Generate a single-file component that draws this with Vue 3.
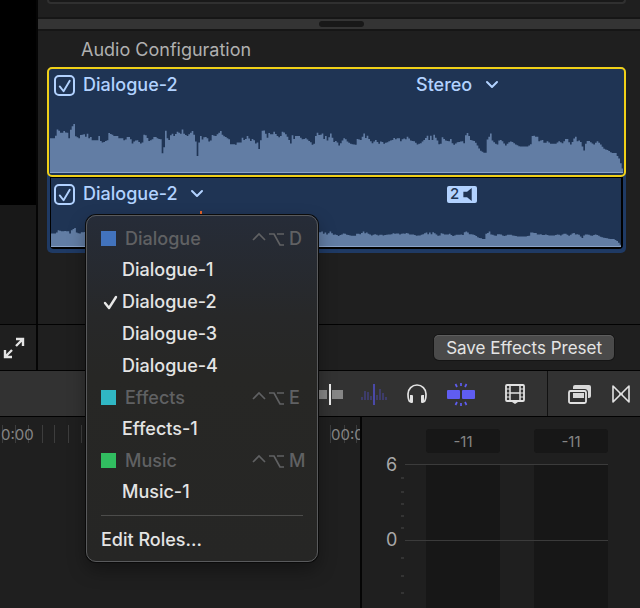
<script setup>
import { ref } from 'vue'

const roleA = ref(true)
const roleB = ref(true)
const layout = ref('Stereo')
const current = ref('Dialogue-2')

const groups = [
  { name: 'Dialogue', key: 'D', tone: 'blue', items: ['Dialogue-1', 'Dialogue-2', 'Dialogue-3', 'Dialogue-4'] },
  { name: 'Effects', key: 'E', tone: 'teal', items: ['Effects-1'] },
  { name: 'Music', key: 'M', tone: 'green', items: ['Music-1'] },
]

// Audio peaks as [position, level] pairs, in thirds of a pixel.
const head = '0,103 10,103 12,110 18,113 20,130 28,123 32,117 40,125 46,120 52,120 56,97 58,125 65,140 69,153 73,130 74,110 85,103 90,113 100,115 107,105 110,117 116,100 120,107 125,97 140,97 145,110 150,95 155,90 165,95 170,97 175,119 183,115 190,110 200,110 205,103 215,103 222,95 232,110 238,105 245,87 252,95 260,97 270,87 275,90 281,119 288,107 295,95 305,100 312,110 320,103 330,100 333,85 335,57 339,57 341,95 343,130 348,120 352,87 358,110 365,117 370,110 380,123 390,117 394,133 400,117 410,110 415,115 425,125 432,110 436,87 439,49 443,49 445,90 450,110 456,97 462,110 470,103 478,87 484,113 495,110 505,120 512,127 516,110 525,107 535,100 540,85 550,85 553,80 560,90 570,90 575,105 582,95 590,110 600,95 607,103 615,87 620,90 624,70 628,70 632,125 640,127 643,105 647,129 651,97 656,125 662,110 670,123 680,110 688,103 694,123 702,120 712,105 720,87 724,117 728,97 735,110 745,110 755,100 765,103 775,95 782,90 788,77 792,95 798,125 803,113 812,115 818,103 826,97 836,113'
const tail = '0,114 5,118 10,101 12,118 20,96 25,106 31,121 36,101 42,88 46,98 55,81 65,96 72,106 78,94 90,86 105,83 110,101 120,98 130,118 135,104 140,111 145,101 155,88 165,98 175,86 182,96 190,86 205,94 215,98 220,104 228,98 232,108 240,94 248,104 254,98 260,108 270,96 280,94 290,84 300,88 310,98 320,111 325,98 330,111 335,98 340,114 350,96 358,78 365,106 375,96 385,94 390,101 398,81 410,91 425,94 432,86 436,121 442,118 450,98 462,94 470,81 478,66 490,59 495,59 498,96 505,108 510,118 515,96 525,86 530,84 537,101 545,94 555,81 565,91 572,94 585,84 598,78 620,78 632,86 636,118 642,108 650,108 655,94 665,98 672,86 680,94 690,86 705,86 715,94 725,88 735,101 742,101 748,81 756,94 764,111 770,94 778,98 782,86 790,66 795,86 802,98 810,91 820,84 830,94 840,84 850,71 862,66 872,58 885,58 895,41 902,21 908,2'

const parse = (s, dx) => s.split(' ').map((p) => p.split(',').map(Number)).map(([x, y]) => [x + dx, y])
const peaks = [...parse(head, 0).filter((p) => p[0] < 810), ...parse(tail, 810)]

function wave(total, scale) {
  let d = `M0 ${total}`
  let i = 0
  for (let x = 0; x < 1719; x += 5) {
    while (i < peaks.length - 1 && peaks[i + 1][0] <= x) i++
    const [x0, y0] = peaks[i]
    const [x1, y1] = peaks[Math.min(i + 1, peaks.length - 1)]
    const t = x1 > x0 ? (x - x0) / (x1 - x0) : 0
    const top = Math.round(total - (y0 + (y1 - y0) * t) * scale)
    d += `V${top}H${Math.min(x + 5, 1719)}`
  }
  return d + `V${total}Z`
}
const mainWave = wave(165, 1)
const subWave = wave(75, 0.38)

const rulerTicks = [2, 15, 28, 42, 54, 68, 81, 330, 344, 356]
const minorTicks = [34, 48, 60, 72, 84, 114, 132, 149]
</script>

<template>
  <main class="app">
    <div class="upper">
      <div class="viewer"><div class="frame"></div></div>
      <section class="inspector">
        <div class="above"><div class="box"></div></div>
        <div class="splitter"><span class="grip"></span></div>
        <h1 class="heading">Audio Configuration</h1>
        <div class="components">
          <article class="component selected">
            <div class="row">
              <label class="enable">
                <span class="tick">
                  <input v-model="roleA" type="checkbox" />
                  <svg v-if="roleA" viewBox="0 0 22 22"><path d="M6 12l4 5 6.500-11" /></svg>
                </span>
                <span>Dialogue-2</span>
              </label>
              <div class="channels">
                <span class="pick">
                  <select v-model="layout" aria-label="Channel layout">
                    <option>Stereo</option>
                    <option>Dual Mono</option>
                  </select>
                  <svg class="chevron" viewBox="0 0 14 10"><path d="M2 2l5 5 5-5" /></svg>
                </span>
              </div>
            </div>
            <svg class="wave" viewBox="0 0 1719 165" preserveAspectRatio="none"><path :d="mainWave" /></svg>
          </article>
          <article class="component sub">
            <div class="row">
              <div class="enable">
                <span class="tick">
                  <input v-model="roleB" type="checkbox" aria-label="Enable component" />
                  <svg v-if="roleB" viewBox="0 0 22 22"><path d="M6 12l4 5 6.500-11" /></svg>
                </span>
                <button class="role" type="button" aria-haspopup="menu" aria-expanded="true">
                  {{ current }}
                  <svg class="chevron" viewBox="0 0 14 10"><path d="M2 2l5 5 5-5" /></svg>
                </button>
              </div>
              <div class="channels">
                <span class="badge">2
                  <svg viewBox="0 0 12 14"><path d="M1 4h4l5-4v14l-5-4H1z" /></svg>
                </span>
              </div>
            </div>
            <span class="peak"></span>
            <svg class="wave small" viewBox="0 0 1719 75" preserveAspectRatio="none"><path :d="subWave" /></svg>
          </article>
        </div>
      </section>
    </div>

    <div class="actions">
      <div class="corner">
        <button class="icon" type="button" aria-label="Full screen">
          <svg width="22" height="22" viewBox="0 0 22 22" fill="none" stroke="#e4e4e4" stroke-width="2.400">
            <path d="M13 2h7v7M20 2l-7 7M9 20H2v-7M2 20l7-7" />
          </svg>
        </button>
      </div>
      <div class="preset"><button type="button" class="save">Save Effects Preset</button></div>
    </div>

    <div class="toolbar">
      <div class="tools">
        <button class="icon" type="button" aria-label="Skimming">
          <svg width="26" height="24" viewBox="0 0 26 24"><path fill="#868686" d="M0 8h10v9H0zM15 8h11v9H15z" /><path fill="#ededed" d="M12 2h2v21h-2z" /></svg>
        </button>
        <button class="icon" type="button" aria-label="Audio skimming">
          <svg width="26" height="24" viewBox="0 0 26 24" stroke="#41407e" stroke-width="1.500">
            <path d="M1 15v3M4 9v9M7 10v8M10 14v4M16 13v5M19 7v11M22 11v7M25 15v3" /><path stroke="#4a49a8" stroke-width="2" d="M13 2v21" />
          </svg>
        </button>
        <button class="icon" type="button" aria-label="Solo">
          <svg width="24" height="24" viewBox="-2 0 24 24" fill="none" stroke="#e2e2e2" stroke-width="1.700">
            <path d="M3 20C1 18 1 15 1 12a9 9 0 0 1 18 0c0 3 0 6-2 8" /><path fill="#e2e2e2" stroke="none" d="M3 13h2q1 0 1 1v6q0 1-1 1H4q-1 0-1-1zM15 13h2v7q0 1-1 1h-1q-1 0-1-1v-6q0-1 1-1z" />
          </svg>
        </button>
        <button class="icon" type="button" aria-label="Snapping">
          <svg width="28" height="24" viewBox="0 0 28 24">
            <rect x="0" y="8" width="13" height="9" rx="1" fill="#5f5df1" /><rect x="15" y="8" width="13" height="9" rx="1" fill="#5f5df1" />
            <path stroke="#5f5df1" stroke-width="1.700" d="M14 1v3M14 21v3M8.500 2l1.500 3M19.500 2l-1.500 3M8.500 23l1.500-3M19.500 23l-1.500-3" />
          </svg>
        </button>
        <button class="icon" type="button" aria-label="Clip appearance">
          <svg width="20" height="24" viewBox="0 0 20 24" fill="none" stroke="#e2e2e2">
            <rect x="1" y="3" width="18" height="16" rx="1" stroke-width="1.800" />
            <path stroke-width="1.500" d="M5 3v16M15 3v16M5 11h10" /><path stroke-width="1.200" d="M1 7h4M1 11h4M1 15h4M15 7h4M15 11h4M15 15h4" />
            <path fill="#e2e2e2" stroke="none" d="M7 19h6v1l-3 2-3-2z" />
          </svg>
        </button>
      </div>
      <div class="browsers">
        <button class="icon" type="button" aria-label="Effects browser">
          <svg width="24" height="24" viewBox="0 0 24 24">
            <rect x="5" y="3" width="18" height="13" rx="2" fill="#d8d8d8" />
            <rect x="1" y="9" width="17" height="12" rx="1.500" fill="none" stroke="#323232" stroke-width="4" />
            <rect x="1" y="9" width="17" height="12" rx="1.500" fill="none" stroke="#e2e2e2" stroke-width="1.800" />
            <rect x="5" y="11" width="11" height="5" fill="#d8d8d8" />
          </svg>
        </button>
        <button class="icon" type="button" aria-label="Transitions browser">
          <svg width="18" height="24" viewBox="0 0 18 24" fill="none" stroke="#e2e2e2" stroke-width="1.600" stroke-linejoin="round">
            <path d="M1 4v16l7-7V11zM17 4v16l-7-7V11zM8 11l2 2M10 11l-2 2" />
          </svg>
        </button>
      </div>
    </div>

    <div class="lower">
      <section class="timeline">
        <svg class="ruler" width="360" height="36">
          <path v-for="x in rulerTicks" :key="x" :d="`M${x + 0.5} 8v18`" stroke="#3d3d3d" />
          <text x="1" y="23">0:00</text>
          <text x="331" y="23">00:00</text>
        </svg>
      </section>
      <section class="meters">
        <div class="readouts"><output>-11</output><output>-11</output></div>
        <svg class="scale" width="247" height="155">
          <path fill="#171717" d="M64 11h74v144H64zM172 11h74v144h-74z" />
          <path fill="#3b3b3b" d="M43 10h203v1H43zM43 86h203v1H43z" />
          <path v-for="y in minorTicks" :key="y" :d="`M39 ${y - 10}h3`" stroke="#4b4b4b" />
          <text x="24" y="17">6</text>
          <text x="24" y="92">0</text>
        </svg>
      </section>
    </div>

    <div class="menu" role="menu">
      <template v-for="g in groups" :key="g.name">
        <div class="group">
          <span class="swatch" :class="g.tone"></span>
          <span class="name">{{ g.name }}</span>
          <span class="keys">
            <svg width="34" height="16" viewBox="0 0 34 16" fill="none" stroke="currentColor" stroke-width="1.700">
              <path d="M1 9l6-6 6 6M17 3h5l6 11h4M25 3h7" />
            </svg>
            <span class="key">{{ g.key }}</span>
          </span>
        </div>
        <button v-for="i in g.items" :key="i" class="item" type="button" role="menuitemradio" :aria-checked="i === current" @click="current = i">
          <svg width="15" height="16" viewBox="0 0 15 16"><path v-if="i === current" d="M2 9l4 5 7-11" /></svg>
          {{ i }}
        </button>
      </template>
      <hr />
      <button class="item edit" type="button" role="menuitem">Edit Roles...</button>
    </div>
  </main>
</template>

<style>
body {
  background: #1f1f1f;
}
</style>

<style scoped>
.app {
  position: relative;
  display: flex;
  flex-direction: column;
  min-height: 100vh;
  overflow: hidden;
  background: #1f1f1f;
  color: #e4e4e4;
  font: 400 18px/22px Inter, "Liberation Sans", sans-serif;
}
.app * {
  box-sizing: border-box;
}
button,
select {
  margin: 0;
  padding: 0;
  border: 0;
  background: none;
  color: inherit;
  font: inherit;
}
svg {
  display: block;
}
.upper {
  display: flex;
}
.viewer {
  width: 38px;
  background: #181818;
  border-right: 2px solid #050505;
}
.frame {
  height: 205px;
  background: #000;
}
.inspector {
  flex: 1;
  padding-bottom: 71px;
}
.above {
  height: 17px;
  padding: 0 14px 0 9px;
}
.box {
  height: 4px;
  border: solid #303030;
  border-width: 0 2px 2px;
  border-radius: 0 0 5px 5px;
  background: #191919;
}
.splitter {
  display: flex;
  align-items: center;
  justify-content: center;
  height: 14px;
  padding-left: 4px;
  border: solid #161616;
  border-width: 2px 0;
  background: #343434;
}
.grip {
  width: 45px;
  height: 6px;
  border-radius: 3px;
  background: #181818;
}
.heading {
  margin: 8px 0 6px 43px;
  color: #b0b0b0;
  font-size: 18px;
  font-weight: 400;
  line-height: 22px;
}
.components {
  margin: 0 14px 0 9px;
  border-radius: 5px;
  background: #1f3a64;
  padding-bottom: 4px;
}
.component {
  display: flex;
  flex-direction: column;
  background: #1f3454;
  color: #b2d2ff;
  font-weight: 500;
}
.selected {
  height: 110px;
  border: 2px solid #f0d018;
  border-radius: 5px;
}
.sub {
  position: relative;
  height: 72px;
  margin: 0 3px;
  border: solid #000;
  border-width: 1px 2px 2px 1px;
  border-radius: 0 0 4px 4px;
}
.row {
  display: grid;
  grid-template-columns: 1fr 208px;
  align-items: center;
  height: 32px;
  padding-left: 5px;
}
.sub .row {
  grid-template-columns: 1fr 174px;
  padding-left: 3px;
}
.enable {
  display: flex;
  align-items: center;
  gap: 8px;
}
.tick {
  display: grid;
  width: 21px;
  height: 21px;
}
.tick input,
.tick svg {
  grid-area: 1 / 1;
  width: 21px;
  height: 21px;
}
.tick input {
  margin: 0;
  appearance: none;
  border: 2px solid #b2d2ff;
  border-radius: 5px;
}
.tick svg {
  pointer-events: none;
  fill: none;
  stroke: #b2d2ff;
  stroke-width: 2;
  stroke-linecap: round;
  stroke-linejoin: round;
}
.chevron {
  width: 14px;
  height: 10px;
  fill: none;
  stroke: #b2d2ff;
  stroke-width: 2;
  stroke-linecap: round;
  stroke-linejoin: round;
  pointer-events: none;
}
.role {
  display: flex;
  align-items: center;
  gap: 12px;
}
.pick {
  display: grid;
  grid-template-columns: 83px;
  align-items: center;
}
.pick select,
.pick svg {
  grid-area: 1 / 1;
}
.pick select {
  width: 100%;
  appearance: none;
}
.pick svg {
  justify-self: end;
}
.badge {
  display: flex;
  align-items: center;
  justify-content: space-between;
  width: 30px;
  height: 17px;
  padding: 0 3px;
  border-radius: 2px;
  background: #b2d2ff;
  color: #1f3454;
  font-size: 15px;
}
.badge svg {
  width: 12px;
  height: 13px;
  fill: #1f3454;
}
.peak {
  position: absolute;
  left: 149px;
  top: 33px;
  width: 2px;
  height: 5px;
  background: #e0622a;
}
.wave {
  width: calc(100% - 2px);
  height: 55px;
  margin: auto 1px 2px;
  border-bottom: 1px solid #8ba3c8;
  fill: #627da4;
}
.wave.small {
  width: 100%;
  height: 25px;
  margin: auto 0 0;
}
.actions {
  display: flex;
  height: 47px;
  border: solid #020202;
  border-width: 1px 0;
}
.corner {
  display: flex;
  align-items: center;
  width: 38px;
  padding-left: 3px;
  border-right: 2px solid #050505;
}
.preset {
  display: flex;
  flex: 1;
  align-items: center;
  justify-content: flex-end;
  padding-right: 26px;
}
.save {
  height: 25px;
  padding: 0 12px;
  border-radius: 5px;
  background: #4a4a4a;
  box-shadow: 0 0 0 1px #151515, inset 0 1px #5d5d5d;
  font-size: 17px;
}
.toolbar {
  display: flex;
  height: 46px;
  border-bottom: 1px solid #020202;
  background: #323232;
}
.tools {
  display: flex;
  flex: 1;
  align-items: center;
  justify-content: flex-end;
  gap: 18px;
  padding-right: 22px;
}
.tools .icon:last-child {
  margin-left: 12px;
}
.browsers {
  display: flex;
  align-items: center;
  gap: 20px;
  padding: 0 10px 0 20px;
  border-left: 1px solid #111;
}
.lower {
  display: flex;
  flex: 1;
}
.timeline {
  flex: 1;
  overflow: hidden;
  border-right: 2px solid #050505;
}
.ruler text {
  fill: #858585;
  font-size: 15px;
}
.meters {
  width: 278px;
  padding-top: 12px;
}
.readouts {
  display: flex;
  gap: 34px;
  padding: 0 0 1px 64px;
}
.readouts output {
  width: 74px;
  height: 24px;
  border-radius: 3px;
  background: #171717;
  color: #858585;
  font-size: 15px;
  line-height: 25px;
  text-align: center;
}
.scale text {
  fill: #a8a8a8;
  font-size: 18px;
}
.menu {
  position: absolute;
  left: 86px;
  top: 215px;
  width: 232px;
  padding: 7px 14px 5px;
  border: 1px solid #595a5c;
  border-radius: 10px;
  background: linear-gradient(#262c38, #272829 100px, #272725 160px, #262625);
  box-shadow: 0 0 0 1px #0b0b0b, 0 8px 18px rgba(0, 0, 0, 0.35);
}
.group {
  display: flex;
  align-items: center;
  height: 31px;
  color: #606163;
  font-weight: 500;
}
.swatch {
  width: 15px;
  height: 15px;
  margin-right: 9px;
}
.blue {
  background: #4273bd;
}
.teal {
  background: #30b7c4;
}
.green {
  background: #31bd60;
}
.keys {
  display: flex;
  align-items: center;
  gap: 3px;
  width: 51px;
  margin-left: auto;
}
.keys svg {
  flex: none;
}
.item {
  display: flex;
  align-items: center;
  gap: 4px;
  width: 100%;
  height: 32px;
  padding-left: 2px;
  font-weight: 500;
}
.item svg {
  fill: none;
  stroke: #e8e8e8;
  stroke-width: 2.4;
  stroke-linecap: round;
  stroke-linejoin: round;
}
hr {
  height: 1px;
  margin: 7px 0 8px;
  border: 0;
  background: #4c4c4b;
}
.edit {
  padding-left: 0;
}
</style>
